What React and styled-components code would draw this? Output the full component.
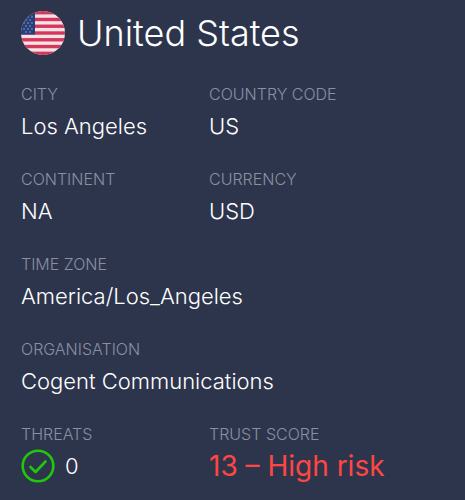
import React from 'react';
import styled, {createGlobalStyle} from 'styled-components';

const GlobalStyle = createGlobalStyle`
    body{
        margin: 0;
        background: #2d354d;
        color: #fff;
        font-family: Inter, 'Liberation Sans', sans-serif;
        font-weight: 300;
    }
`;

const Card = styled.main`
    padding: 8px 21px 12px;
`;

const Header = styled.header`
    display: flex;
    align-items: center;
    gap: 12px;
    margin-bottom: 24px;

    & h1{
        margin: 0;
        font-size: 36px;
        font-weight: 300;
        line-height: 50px;
    }
`;

const Flag = styled.svg`
    width: 44px;
    height: 44px;
    flex: none;
`;

const Details = styled.dl`
    display: grid;
    grid-template-columns: 4fr 5fr;
    row-gap: 21px;
    margin: 0;
`;

const Field = styled.div`
    grid-column: ${({$wide}) => ($wide ? '1 / -1' : 'auto')};
`;

const Label = styled.dt`
    color: #8a90a1;
    font-size: 16px;
    line-height: 24px;
`;

const Value = styled.dd`
    display: flex;
    align-items: center;
    gap: 10px;
    margin: 0;
    color: ${({$risk}) => ($risk ? '#ff4642' : '#fff')};
    font-size: ${({$risk}) => ($risk ? 28 : 22)}px;
    font-weight: ${({$risk}) => ($risk ? 400 : 300)};
    line-height: 40px;
`;

const Tick = styled.svg`
    width: 34px;
    height: 34px;
    fill: none;
    stroke: #22c70b;
    stroke-linecap: round;
    stroke-linejoin: round;
`;

const STRIPES = [0, 1, 2, 3, 4, 5, 6];
const STARS = [[5, 3], [9, 3], [3, 6], [7, 6], [11, 6], [5, 9], [9, 9], [3, 12], [7, 12], [11, 12], [5, 15], [9, 15], [3, 18], [7, 18], [11, 18], [5, 21], [9, 21]];

const UsFlag = () => (
    <Flag viewBox="0 0 44 44" role="img" aria-label="Flag of the United States">
        <clipPath id="round"><circle cx="22" cy="22" r="22" /></clipPath>
        <g clipPath="url(#round)">
            <rect width="44" height="44" fill="#f3e3e9" />
            {STRIPES.map((v) => (
                <rect key={v} y={v * 6.77} width="44" height="3.4" fill="#d5375a" />
            ))}
            <rect width="14" height="23.5" fill="#263f7c" />
            {STARS.map(([x, y]) => (
                <circle key={`${x}-${y}`} cx={x} cy={y} r="0.9" fill="#6583ae" />
            ))}
        </g>
    </Flag>
);

const App = () => {
    return (
        <>
            <GlobalStyle />
            <Card>
                <Header>
                    <UsFlag />
                    <h1>United States</h1>
                </Header>
                <Details>
                    <Field>
                        <Label>CITY</Label>
                        <Value>Los Angeles</Value>
                    </Field>
                    <Field>
                        <Label>COUNTRY CODE</Label>
                        <Value>US</Value>
                    </Field>
                    <Field>
                        <Label>CONTINENT</Label>
                        <Value>NA</Value>
                    </Field>
                    <Field>
                        <Label>CURRENCY</Label>
                        <Value>USD</Value>
                    </Field>
                    <Field $wide>
                        <Label>TIME ZONE</Label>
                        <Value>America/Los_Angeles</Value>
                    </Field>
                    <Field $wide>
                        <Label>ORGANISATION</Label>
                        <Value>Cogent Communications</Value>
                    </Field>
                    <Field>
                        <Label>THREATS</Label>
                        <Value>
                            <Tick viewBox="0 0 34 34" aria-hidden="true">
                                <circle cx="17" cy="17" r="15.3" strokeWidth="2.6" />
                                <path d="M9.5 18l5 5 10-10.5" strokeWidth="2.6" />
                            </Tick>
                            0
                        </Value>
                    </Field>
                    <Field>
                        <Label>TRUST SCORE</Label>
                        <Value $risk>13 – High risk</Value>
                    </Field>
                </Details>
            </Card>
        </>
    );
};

export default App;
